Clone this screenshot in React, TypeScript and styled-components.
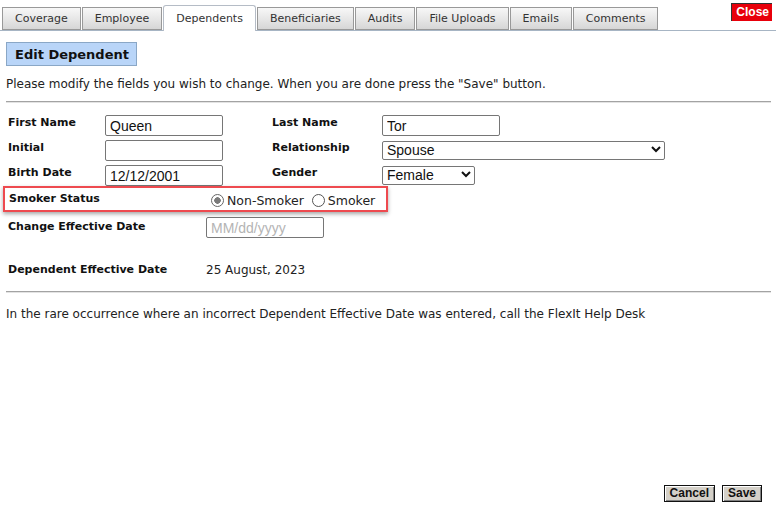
import React from "react";
import styled, { createGlobalStyle } from "styled-components";

const Global = createGlobalStyle`
  html, body { margin: 0; padding: 0; background: #fff; }
  body { font-family: "DejaVu Sans", Verdana, sans-serif; color: #111; }
  * { box-sizing: border-box; }
`;

const Page = styled.div`
  display: flex;
  flex-direction: column;
  min-height: 519px;
  width: 776px;
`;

const TabBar = styled.div`
  display: flex;
  align-items: flex-end;
  height: 31px;
  padding-left: 2px;
  border-bottom: 1px solid #a7b5c4;
`;

const Tab = styled.div<{ $active?: boolean }>`
  height: ${(p) => (p.$active ? "26px" : "23px")};
  margin-right: 1px;
  margin-bottom: ${(p) => (p.$active ? "-1px" : "0")};
  padding: 0 12px;
  display: flex;
  align-items: center;
  font-size: 11px;
  color: #333;
  border: 1px solid ${(p) => (p.$active ? "#b5bcc6" : "#999")};
  border-bottom: ${(p) => (p.$active ? "none" : "1px solid #999")};
  border-radius: ${(p) => (p.$active ? "3px 3px 0 0" : "0")};
  background: ${(p) =>
    p.$active ? "#fff" : "linear-gradient(#f7f7f7, #e4e4e4 60%, #d6d6d6)"};
`;

const CloseButton = styled.button`
  margin-left: auto;
  margin-right: 4px;
  align-self: flex-start;
  margin-top: 3px;
  height: 18px;
  padding: 0 3px 0 4px;
  background: #e8000b;
  color: #fff;
  font-family: "Liberation Sans", Arial, sans-serif;
  font-weight: bold;
  font-size: 12px;
  border: none;
  border-left: 1px solid #333;
  border-top: 1px solid #333;
  line-height: 15px;
`;

const Body = styled.div`
  padding: 11px 5px 0 6px;
  display: flex;
  flex-direction: column;
  flex: 1;
`;

const SectionTitle = styled.div`
  align-self: flex-start;
  height: 24px;
  padding: 0 7px 0 8px;
  display: flex;
  align-items: center;
  background: #b9d5f8;
  border: 1px solid #8aa7c6;
  font-weight: bold;
  font-size: 13px;
  color: #111;
`;

const Instructions = styled.p`
  margin: 11px 0 0 0;
  font-size: 12px;
  line-height: 15px;
  color: #222;
`;

const Rule = styled.hr<{ $mt?: number }>`
  margin: ${(p) => p.$mt ?? 9}px 0 0 0;
  border: none;
  border-top: 1px solid #a3a3a3;
  border-bottom: 1px solid #e3e3e3;
  height: 0;
`;

const FormGrid = styled.div`
  display: grid;
  grid-template-columns: 97px 117px 50px 110px auto;
  grid-template-rows: 25px 25px 21px;
  margin-top: 12px;
  padding-left: 2px;
  align-items: start;
`;

const Label = styled.div<{ $col?: number }>`
  grid-column: ${(p) => p.$col ?? "auto"};
  font-weight: bold;
  font-size: 11px;
  line-height: 14px;
  padding-top: 1px;
  color: #111;
`;

const TextInput = styled.input<{ $w?: number }>`
  width: ${(p) => p.$w ?? 118}px;
  height: 21px;
  border: 1px solid #767676;
  border-radius: 2px;
  padding: 1px 4px 0 4px;
  font-family: "Liberation Sans", Arial, sans-serif;
  font-size: 14px;
  color: #111;
  outline: none;
  &::placeholder { color: #b4b4b4; }
`;

const SelectWrap = styled.div<{ $w: number }>`
  position: relative;
  width: ${(p) => p.$w}px;
`;

const Select = styled.select`
  appearance: none;
  width: 100%;
  height: 19px;
  border: 1px solid #767676;
  border-radius: 2px;
  padding: 0 0 0 4px;
  font-family: "Liberation Sans", Arial, sans-serif;
  font-size: 14px;
  color: #111;
  background: #fff;
  outline: none;
`;

const Chevron = styled.svg`
  position: absolute;
  right: 4px;
  top: 5px;
  width: 10px;
  height: 8px;
  pointer-events: none;
`;

const SmokerRow = styled.div`
  display: flex;
  align-items: center;
  width: 385px;
  height: 26px;
  margin-left: -3px;
  padding-left: 4px;
  border: 2px solid #ee4a4f;
  box-shadow: 0 2px 4px rgba(0, 0, 0, 0.35);
`;

const RowLabel = styled.div<{ $w?: number }>`
  width: ${(p) => p.$w ?? 198}px;
  flex-shrink: 0;
  font-weight: bold;
  font-size: 11px;
  line-height: 14px;
  color: #111;
`;

const RadioGroup = styled.div`
  display: flex;
  align-items: center;
  margin-left: 4px;
  margin-top: 3px;
`;

const RadioLabel = styled.label`
  display: flex;
  align-items: center;
  font-size: 12.5px;
  color: #222;
  margin-right: 8px;
`;

const Radio = styled.input`
  appearance: none;
  width: 13px;
  height: 13px;
  margin: 0 3px 0 0;
  border: 1px solid #555;
  border-radius: 50%;
  background: #fff;
  &:checked {
    border-color: #666;
    background: radial-gradient(circle, #7a7a7a 0 3px, #fff 3.5px);
  }
`;

const FieldRow = styled.div<{ $mt?: number; $h?: number }>`
  display: flex;
  align-items: center;
  margin-top: ${(p) => p.$mt ?? 0}px;
  height: ${(p) => p.$h ?? 22}px;
  padding-left: 2px;
`;

const Value = styled.div`
  font-size: 12px;
  color: #222;
`;

const Note = styled.p`
  margin: 14px 0 0 0;
  font-size: 12px;
  line-height: 15px;
  color: #222;
`;

const Actions = styled.div`
  margin-top: auto;
  display: flex;
  justify-content: flex-end;
  gap: 7px;
  padding: 0 9px 17px 0;
`;

const ActionButton = styled.button`
  height: 17px;
  padding: 0 5px;
  background: #d4d0c8;
  border: 1px solid #111;
  box-shadow: inset 1px 1px #fff, inset -1px -1px #808080;
  font-family: "Liberation Sans", Arial, sans-serif;
  font-weight: bold;
  font-size: 12px;
  line-height: 13px;
  color: #111;
`;

const ChevronIcon = () => (
  <Chevron viewBox="0 0 10 8">
    <path d="M1 2 L5 6 L9 2" fill="none" stroke="#111" strokeWidth="2" />
  </Chevron>
);

const tabs = [
  "Coverage",
  "Employee",
  "Dependents",
  "Beneficiaries",
  "Audits",
  "File Uploads",
  "Emails",
  "Comments",
];

export default function App() {
  return (
    <>
      <Global />
      <Page>
        <TabBar>
          {tabs.map((t) => (
            <Tab key={t} $active={t === "Dependents"}>
              {t}
            </Tab>
          ))}
          <CloseButton>Close</CloseButton>
        </TabBar>
        <Body>
          <SectionTitle>Edit Dependent</SectionTitle>
          <Instructions>
            Please modify the fields you wish to change. When you are done press the "Save" button.
          </Instructions>
          <Rule />
          <FormGrid>
            <Label>First Name</Label>
            <TextInput defaultValue="Queen" />
            <Label $col={4}>Last Name</Label>
            <TextInput defaultValue="Tor" />

            <Label>Initial</Label>
            <TextInput defaultValue="" />
            <Label $col={4}>Relationship</Label>
            <SelectWrap $w={283}>
              <Select defaultValue="Spouse">
                <option>Spouse</option>
                <option>Child</option>
              </Select>
              <ChevronIcon />
            </SelectWrap>

            <Label>Birth Date</Label>
            <TextInput defaultValue="12/12/2001" />
            <Label $col={4}>Gender</Label>
            <SelectWrap $w={93}>
              <Select defaultValue="Female">
                <option>Female</option>
                <option>Male</option>
              </Select>
              <ChevronIcon />
            </SelectWrap>
          </FormGrid>
          <SmokerRow>
            <RowLabel $w={198}>Smoker Status</RowLabel>
            <RadioGroup>
              <RadioLabel>
                <Radio type="radio" name="smoker" defaultChecked />
                Non-Smoker
              </RadioLabel>
              <RadioLabel>
                <Radio type="radio" name="smoker" />
                Smoker
              </RadioLabel>
            </RadioGroup>
          </SmokerRow>
          <FieldRow $mt={4}>
            <RowLabel>Change Effective Date</RowLabel>
            <TextInput $w={118} placeholder="MM/dd/yyyy" />
          </FieldRow>
          <FieldRow $mt={21}>
            <RowLabel>Dependent Effective Date</RowLabel>
            <Value>25 August, 2023</Value>
          </FieldRow>
          <Rule $mt={10} />
          <Note>
            In the rare occurrence where an incorrect Dependent Effective Date was entered, call the FlexIt Help Desk
          </Note>
          <Actions>
            <ActionButton>Cancel</ActionButton>
            <ActionButton>Save</ActionButton>
          </Actions>
        </Body>
      </Page>
    </>
  );
}
